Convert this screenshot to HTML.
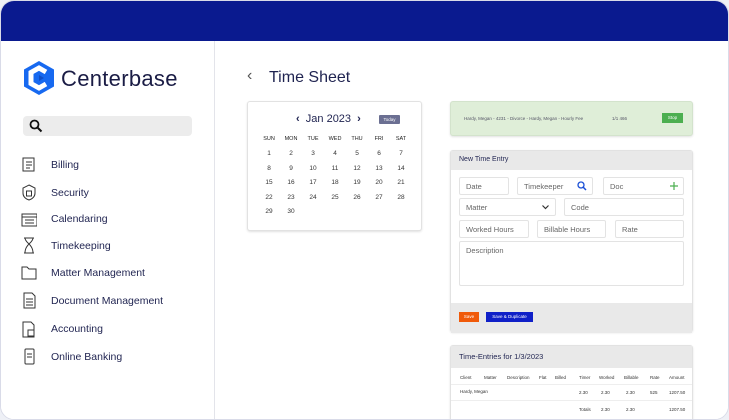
<!DOCTYPE html>
<html><head><style>
*{margin:0;padding:0;box-sizing:border-box}
body{width:729px;height:414px;overflow:hidden;background:#eef0f6;font-family:"Liberation Sans",sans-serif;color:#1f2350;position:relative}
.frame{position:absolute;left:0;top:0;width:729px;height:420px;border-radius:14px;overflow:hidden;background:#fff;border:1px solid #d9dbe8}
.top{position:absolute;left:0;top:0;width:100%;height:40px;background:#0a1a8f}
.side{position:absolute;left:0;top:40px;width:214px;height:380px;border-right:1px solid #e3e4ea;background:#fff}
.main{position:absolute;left:215px;top:40px;right:0;height:380px;background:#fff}
.abs{position:absolute}
.mi{position:absolute;left:50px;font-size:10.5px;color:#1f2350}
.ic{position:absolute;left:20px;width:16px;height:17px}
.card{position:absolute;background:#fff;border:1px solid #e2e2e2;border-radius:3px;box-shadow:0 1px 2px rgba(0,0,0,.12)}
.cal{font-size:6.5px;color:#333;text-align:center}
.cal td{width:22px;height:14.5px}
.inp{position:absolute;border:1px solid #e3e3e3;border-radius:2px;font-size:7.5px;color:#666;padding:6px 6px;height:18px;line-height:5px}
.th{position:absolute;font-size:4.5px;color:#333}
</style></head><body>
<div class="frame">
<div class="top"></div>
<div class="side">
 <svg class="abs" style="left:22px;top:19px" width="32" height="36" viewBox="0 0 32 36">
  <polygon points="16,1 31,9.5 31,26.5 16,35 1,26.5 1,9.5" fill="#1769f0"/>
  <path d="M23 12 L16 8 L8 12.5 L8 23.5 L16 28 L23 24" fill="none" stroke="#fff" stroke-width="5"/>
  <polygon points="16,15 21,18 16,21" fill="#0f4fc8"/>
 </svg>
 <div class="abs" style="left:60px;top:25px;font-size:22px;color:#1a1c45;letter-spacing:0.3px">Centerbase</div>
 <div class="abs" style="left:22px;top:75px;width:169px;height:20px;background:#ececec;border-radius:4px"></div>
 <svg class="abs" style="left:28px;top:78px" width="14" height="14" viewBox="0 0 14 14"><circle cx="5.5" cy="5.5" r="4" fill="none" stroke="#111" stroke-width="1.8"/><line x1="8.5" y1="8.5" x2="12.5" y2="12.5" stroke="#111" stroke-width="2"/></svg>
 <svg class="ic" style="top:115px" viewBox="0 0 16 17"><rect x="2" y="2" width="11" height="13" fill="none" stroke="#333" stroke-width="1"/><path d="M5 6h6M5 9h6M5 12h4" stroke="#333"/></svg>
 <div class="mi" style="top:118px">Billing</div>
 <svg class="ic" style="top:143px" viewBox="0 0 16 17"><path d="M8 1l6 3v5c0 4-3 6-6 7-3-1-6-3-6-7V4z" fill="none" stroke="#333"/><rect x="5.5" y="7" width="5" height="5" fill="none" stroke="#333"/></svg>
 <div class="mi" style="top:146px">Security</div>
 <svg class="ic" style="top:170px" viewBox="0 0 16 17"><rect x="1" y="3" width="15" height="12" fill="none" stroke="#333"/><path d="M1 6h15M4 9h9M4 12h9" stroke="#333"/></svg>
 <div class="mi" style="top:172px">Calendaring</div>
 <svg class="ic" style="top:196px" viewBox="0 0 16 17"><path d="M3 1h10M3 16h10M4 1c0 5 8 6 8 15M12 1c0 5-8 6-8 15" fill="none" stroke="#333"/></svg>
 <div class="mi" style="top:199px">Timekeeping</div>
 <svg class="ic" style="top:223px" viewBox="0 0 16 17"><path d="M1 3h5l2 2h7v10H1z" fill="none" stroke="#333"/></svg>
 <div class="mi" style="top:226px">Matter Management</div>
 <svg class="ic" style="top:251px" viewBox="0 0 16 17"><path d="M3 1h8l3 3v12H3z" fill="none" stroke="#333"/><path d="M5 7h7M5 10h7M5 13h7" stroke="#333"/></svg>
 <div class="mi" style="top:254px">Document Management</div>
 <svg class="ic" style="top:280px" viewBox="0 0 16 17"><path d="M2 1h8l3 3v12H2z" fill="none" stroke="#333"/><rect x="7" y="9" width="6" height="6" fill="none" stroke="#333"/></svg>
 <div class="mi" style="top:282px">Accounting</div>
 <svg class="ic" style="top:307px" viewBox="0 0 16 17"><rect x="4" y="1" width="9" height="15" rx="1" fill="none" stroke="#333"/><path d="M6 6h5M6 9h5" stroke="#333"/></svg>
 <div class="mi" style="top:310px">Online Banking</div>
</div>
<div class="main">
 <div class="abs" style="left:31px;top:26px;font-size:16px;color:#555">&lsaquo;</div>
 <div class="abs" style="left:53px;top:28px;font-size:16px;color:#1f2350">Time Sheet</div>
 <div class="card" style="left:31px;top:60px;width:175px;height:130px">
  <div class="abs" style="left:48px;top:11px;font-size:11px;color:#1f2350"><b>&lsaquo;</b>&nbsp; Jan 2023 &nbsp;<b>&rsaquo;</b></div>
  <div class="abs" style="left:131px;top:13px;width:21px;height:9px;background:#6b6f92;color:#fff;font-size:4.5px;text-align:center;line-height:9px;border-radius:1px">Today</div>
  <table class="cal abs" style="left:10px;top:30px;border-collapse:collapse">
   <tr style="font-size:5.5px;color:#222"><td>SUN</td><td>MON</td><td>TUE</td><td>WED</td><td>THU</td><td>FRI</td><td>SAT</td></tr>
   <tr><td>1</td><td>2</td><td>3</td><td>4</td><td>5</td><td>6</td><td>7</td></tr>
   <tr><td>8</td><td>9</td><td>10</td><td>11</td><td>12</td><td>13</td><td>14</td></tr>
   <tr><td>15</td><td>16</td><td>17</td><td>18</td><td>19</td><td>20</td><td>21</td></tr>
   <tr><td>22</td><td>23</td><td>24</td><td>25</td><td>26</td><td>27</td><td>28</td></tr>
   <tr><td>29</td><td>30</td><td></td><td></td><td></td><td></td><td></td></tr>
  </table>
 </div>
 <div class="card" style="left:234px;top:60px;width:243px;height:35px;background:#dfeed8;border-color:#d3e3cc">
  <div class="abs" style="left:13px;top:14px;font-size:4.5px;color:#556">Hardy, Megan - 4231 - Divorce - Hardy, Megan - Hourly Fee</div>
  <div class="abs" style="left:161px;top:14px;font-size:4.5px;color:#556">1/1 466</div>
  <div class="abs" style="left:211px;top:11px;width:21px;height:10px;background:#4caf50;color:#fff;font-size:4.5px;text-align:center;line-height:10px">Stop</div>
 </div>
 <div class="card" style="left:234px;top:109px;width:243px;height:182px">
  <div class="abs" style="left:0;top:0;width:100%;height:19px;background:#e9e9e9;font-size:7px;padding:5px 8px">New Time Entry</div>
  <div class="inp" style="left:8px;top:26px;width:50px">Date</div>
  <div class="inp" style="left:66px;top:26px;width:76px">Timekeeper<svg class="abs" style="right:5px;top:3px" width="10" height="10" viewBox="0 0 10 10"><circle cx="4" cy="4" r="3" fill="none" stroke="#1a4fd6" stroke-width="1.3"/><line x1="6" y1="6" x2="9" y2="9" stroke="#1a4fd6" stroke-width="1.5"/></svg></div>
  <div class="inp" style="left:152px;top:26px;width:81px">Doc<svg class="abs" style="right:5px;top:4px" width="8" height="8" viewBox="0 0 8 8"><path d="M4 0v8M0 4h8" stroke="#4caf50" stroke-width="1.2"/></svg></div>
  <div class="inp" style="left:8px;top:47px;width:97px">Matter<svg class="abs" style="right:6px;top:6px" width="7" height="5" viewBox="0 0 7 5"><path d="M0.5 0.5L3.5 3.5L6.5 0.5" fill="none" stroke="#333" stroke-width="1.2"/></svg></div>
  <div class="inp" style="left:113px;top:47px;width:120px">Code</div>
  <div class="inp" style="left:8px;top:69px;width:70px">Worked Hours</div>
  <div class="inp" style="left:86px;top:69px;width:69px">Billable Hours</div>
  <div class="inp" style="left:164px;top:69px;width:69px">Rate</div>
  <div class="inp" style="left:8px;top:90px;width:225px;height:45px">Description</div>
  <div class="abs" style="left:0;top:152px;width:100%;height:30px;background:#e9e9e9"></div>
  <div class="abs" style="left:8px;top:161px;width:20px;height:10px;background:#f05a0a;color:#fff;font-size:4.5px;text-align:center;line-height:10px">Save</div>
  <div class="abs" style="left:35px;top:161px;width:47px;height:10px;background:#1020c8;color:#fff;font-size:4.5px;text-align:center;line-height:10px">Save &amp; Duplicate</div>
 </div>
 <div class="card" style="left:234px;top:304px;width:243px;height:80px">
  <div class="abs" style="left:0;top:0;width:100%;height:22px;background:#e9e9e9;font-size:7.5px;padding:6px 8px">Time-Entries for 1/3/2023</div>
  <div class="th" style="left:9px;top:29px">Client</div><div class="th" style="left:33px;top:29px">Matter</div><div class="th" style="left:56px;top:29px">Description</div><div class="th" style="left:88px;top:29px">Flat</div><div class="th" style="left:104px;top:29px">Billed</div><div class="th" style="left:128px;top:29px">Timer</div><div class="th" style="left:148px;top:29px">Worked</div><div class="th" style="left:173px;top:29px">Billable</div><div class="th" style="left:199px;top:29px">Rate</div><div class="th" style="left:218px;top:29px">Amount</div>
  <div class="abs" style="left:0;top:38px;width:100%;border-top:1px solid #eee"></div>
  <div class="th" style="left:9px;top:43px">Hardy, Megan</div><div class="th" style="left:128px;top:44px">2.30</div><div class="th" style="left:150px;top:44px">2.30</div><div class="th" style="left:175px;top:44px">2.30</div><div class="th" style="left:199px;top:44px">525</div><div class="th" style="left:218px;top:44px">1207.50</div>
  <div class="abs" style="left:0;top:54px;width:100%;border-top:1px solid #eee"></div>
  <div class="th" style="left:128px;top:61px">Totals</div><div class="th" style="left:150px;top:61px">2.30</div><div class="th" style="left:175px;top:61px">2.30</div><div class="th" style="left:218px;top:61px">1207.50</div>
 </div>
</div>
</div>
</body></html>
